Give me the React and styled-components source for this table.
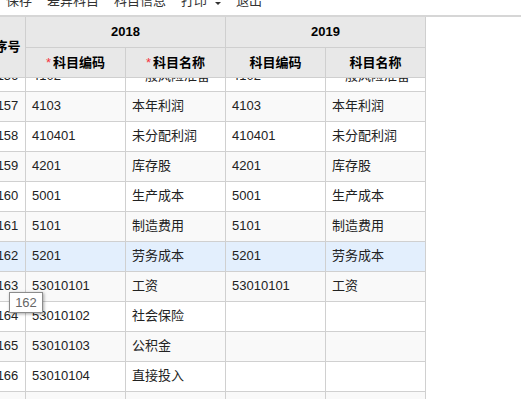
import React from "react";
import styled, { createGlobalStyle } from "styled-components";

const GlobalStyle = createGlobalStyle`
  html, body { margin: 0; padding: 0; background: #fff; overflow: hidden; }
  body { font-family: "Liberation Sans", "Noto Sans CJK SC", sans-serif; font-size: 13px; color: #333; }
  * { box-sizing: border-box; }
`;

const Page = styled.div`
  position: relative;
  width: 521px;
  height: 399px;
  overflow: hidden;
`;

const Toolbar = styled.div`
  height: 15px;
  display: flex;
  align-items: flex-end;
  gap: 15px;
  padding: 0 0 8px 6px;
  overflow: hidden;
`;

const MenuItem = styled.span`
  display: inline-flex;
  align-items: center;
  line-height: 13px;
  height: 13px;
  color: #333;
  white-space: nowrap;
`;

const Caret = styled.i`
  display: inline-block;
  margin-left: 8px;
  margin-top: 5px;
  width: 0;
  height: 0;
  border-left: 3px solid transparent;
  border-right: 3px solid transparent;
  border-top: 3px solid #333;
`;

const TopRule = styled.div`
  height: 2px;
  background: #d6d6d6;
`;

const COLS = "35px repeat(4, 99px)";

const HeaderGrid = styled.div`
  display: grid;
  grid-template-columns: ${COLS};
  grid-template-rows: 30px 29px;
  gap: 1px;
  width: max-content;
  margin-left: -10px;
  padding: 0 1px 1px 0;
  background: #cfcfcf;
`;

const HeadCell = styled.div`
  background: #e8e8e8;
  display: flex;
  align-items: center;
  justify-content: center;
  font-weight: bold;
  line-height: 16px;
  color: #000;
  white-space: nowrap;
  grid-row: ${(p) => p.$row || "auto"};
  grid-column: ${(p) => p.$col || "auto"};
`;

const Star = styled.span`
  color: #f5323c;
  font-weight: normal;
  margin-right: 2px;
`;

const BodyViewport = styled.div`
  height: 321px;
  overflow: hidden;
`;

const BodyScroller = styled.div`
  margin-top: -16px;
  margin-left: -10px;
  width: max-content;
`;

const Row = styled.div`
  display: grid;
  grid-template-columns: ${COLS};
  height: 30px;
  gap: 1px;
  padding: 0 1px 1px 0;
  background: #d0d0d0;
`;

const Cell = styled.div`
  background: ${(p) => (p.$tone === "hl" ? "#e3effd" : p.$tone === "odd" ? "#f9f9f9" : "#fff")};
  display: flex;
  align-items: center;
  justify-content: ${(p) => (p.$center ? "center" : "flex-start")};
  padding: ${(p) => (p.$center ? "0 0 2px" : "0 6px 2px")};
  line-height: 16px;
  color: #222;
  white-space: nowrap;
  overflow: hidden;
`;

const Tooltip = styled.div`
  position: absolute;
  left: 9px;
  top: 292px;
  width: 34px;
  height: 21px;
  background: #fff;
  border: 1px solid #8c8c8c;
  box-shadow: 1px 1px 3px rgba(0, 0, 0, 0.35);
  color: #666;
  display: flex;
  align-items: center;
  justify-content: center;
  font-size: 13px;
  line-height: 16px;
`;

const rows = [
  [156, "4102", "一般风险准备", "4102", "一般风险准备"],
  [157, "4103", "本年利润", "4103", "本年利润"],
  [158, "410401", "未分配利润", "410401", "未分配利润"],
  [159, "4201", "库存股", "4201", "库存股"],
  [160, "5001", "生产成本", "5001", "生产成本"],
  [161, "5101", "制造费用", "5101", "制造费用"],
  [162, "5201", "劳务成本", "5201", "劳务成本"],
  [163, "53010101", "工资", "53010101", "工资"],
  [164, "53010102", "社会保险", "", ""],
  [165, "53010103", "公积金", "", ""],
  [166, "53010104", "直接投入", "", ""],
  [167, "53010105", "折旧费用", "", ""],
];

export default function App() {
  return (
    <Page>
      <GlobalStyle />
      <Toolbar>
        <MenuItem>保存</MenuItem>
        <MenuItem>差异科目</MenuItem>
        <MenuItem>科目信息</MenuItem>
        <MenuItem>
          打印
          <Caret />
        </MenuItem>
        <MenuItem>退出</MenuItem>
      </Toolbar>
      <TopRule />
      <HeaderGrid>
        <HeadCell $row="1 / 3" $col="1">序号</HeadCell>
        <HeadCell $row="1" $col="2 / 4">2018</HeadCell>
        <HeadCell $row="1" $col="4 / 6">2019</HeadCell>
        <HeadCell $row="2" $col="2">
          <Star>*</Star>科目编码
        </HeadCell>
        <HeadCell $row="2" $col="3">
          <Star>*</Star>科目名称
        </HeadCell>
        <HeadCell $row="2" $col="4">科目编码</HeadCell>
        <HeadCell $row="2" $col="5">科目名称</HeadCell>
      </HeaderGrid>
      <BodyViewport>
        <BodyScroller>
          {rows.map(([n, c1, n1, c2, n2]) => {
            const tone = n === 162 ? "hl" : n % 2 === 1 ? "odd" : "even";
            return (
              <Row key={n}>
                <Cell $tone={tone} $center>{n}</Cell>
                <Cell $tone={tone}>{c1}</Cell>
                <Cell $tone={tone}>{n1}</Cell>
                <Cell $tone={tone}>{c2}</Cell>
                <Cell $tone={tone}>{n2}</Cell>
              </Row>
            );
          })}
        </BodyScroller>
      </BodyViewport>
      <Tooltip>162</Tooltip>
    </Page>
  );
}
